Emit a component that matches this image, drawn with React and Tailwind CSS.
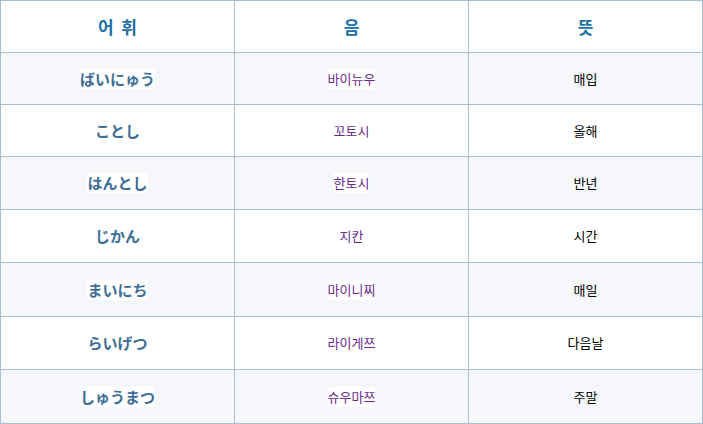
import React from 'react';

const rows = [
  { word: 'ばいにゅう', sound: '바이뉴우', meaning: '매입', h: 'h-[52px]' },
  { word: 'ことし', sound: '꼬토시', meaning: '올해', h: 'h-[52px]' },
  { word: 'はんとし', sound: '한토시', meaning: '반년', h: 'h-[53px]' },
  { word: 'じかん', sound: '지칸', meaning: '시간', h: 'h-[53px]' },
  { word: 'まいにち', sound: '마이니찌', meaning: '매일', h: 'h-[54px]' },
  { word: 'らいげつ', sound: '라이게쯔', meaning: '다음날', h: 'h-[53px]' },
  { word: 'しゅうまつ', sound: '슈우마쯔', meaning: '주말', h: 'h-[53px]' },
];

const font = "font-['Noto_Sans_CJK_KR','Noto_Sans_CJK_JP',sans-serif]";

const App = () => {
  return (
    <div className={`w-[703px] h-[424px] bg-white ${font}`}>
      <div className="w-[703px] border border-[#a9bfd2]">
        {/* Header */}
        <div className="flex h-[52px] border-b border-[#a9bfd2] bg-white">
          <div className="w-[234px] flex items-center justify-center text-[17px] font-bold text-[#1b6fa6] border-r border-[#a9bfd2]">
            <span className="whitespace-pre">어  휘</span>
          </div>
          <div className="w-[234px] flex items-center justify-center text-[17px] font-bold text-[#1b6fa6] border-r border-[#a9bfd2]">
            음
          </div>
          <div className="w-[233px] flex items-center justify-center text-[17px] font-bold text-[#1b6fa6]">
            뜻
          </div>
        </div>

        {/* Body */}
        {rows.map((row, idx) => (
          <div
            key={idx}
            className={`flex ${row.h} ${idx < rows.length - 1 ? 'border-b border-[#a9bfd2]' : ''} ${idx % 2 === 0 ? 'bg-[#f5f7fa]' : 'bg-white'}`}
          >
            <div className="w-[234px] flex items-center justify-center border-r border-[#a9bfd2]">
              <span className="bg-white text-[15px] font-bold text-[#3d6e97] leading-[20px]">{row.word}</span>
            </div>
            <div className="w-[234px] flex items-center justify-center border-r border-[#a9bfd2]">
              <span className="bg-white text-[13px] text-[#6b2a8c] leading-[20px]">{row.sound}</span>
            </div>
            <div className="w-[233px] flex items-center justify-center">
              <span className="text-[13px] text-black leading-[20px]">{row.meaning}</span>
            </div>
          </div>
        ))}
      </div>
    </div>
  );
};

export default App;
